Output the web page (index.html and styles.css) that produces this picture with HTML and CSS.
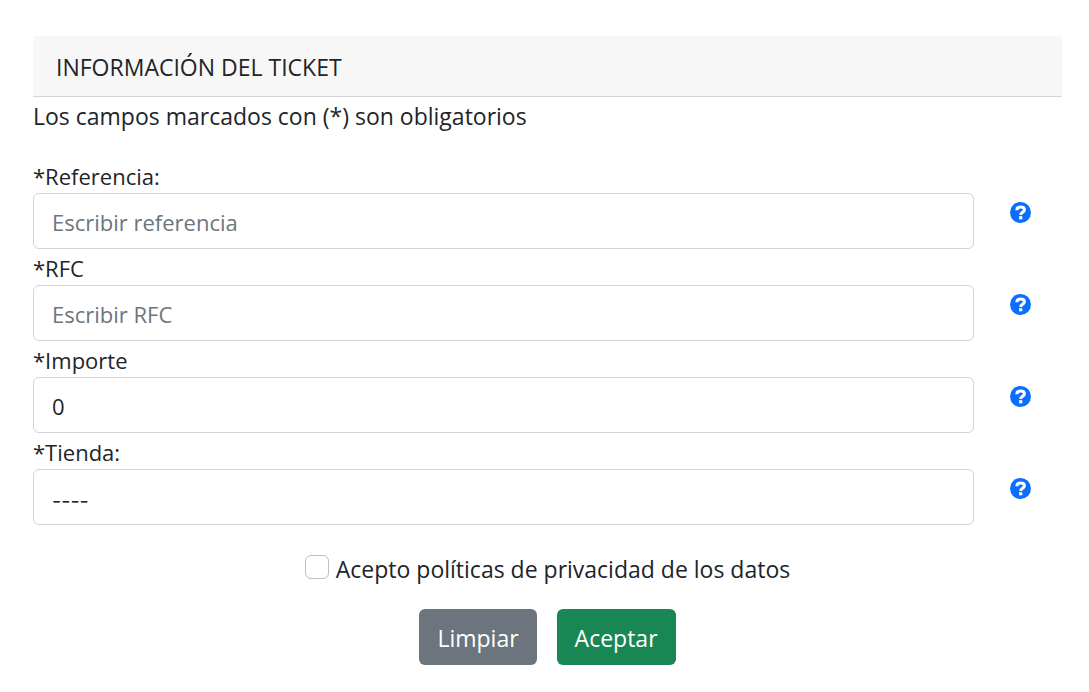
FILE: index.html
```html
<!DOCTYPE html>
<html lang="es">
<head>
<meta charset="utf-8">
<meta name="viewport" content="width=device-width, initial-scale=1">
<title>Información del ticket</title>
<link rel="stylesheet" href="styles.css">
</head>
<body>
<svg class="sprite" aria-hidden="true">
  <symbol id="help" viewBox="0 0 21 21">
    <circle cx="10.500" cy="10.500" r="10.500" fill="currentColor"/>
    <path d="M6.700 8.200C6.800 5.900 8.200 4.900 10.600 4.900c2.500 0 3.800 1.200 3.800 2.900 0 2.700-3.700 2.300-3.700 5.200" fill="none" stroke="#fff" stroke-width="3"/>
    <path d="M9.100 14.200h3.200v3.100H9.100z" fill="#fff"/>
  </symbol>
</svg>
<main class="page">
  <header class="card-header"><h1 class="title">INFORMACIÓN DEL TICKET</h1></header>
  <p class="note">Los campos marcados con (*) son obligatorios</p>
  <form class="form">
    <div class="field">
      <label class="label" for="referencia">*Referencia:</label>
      <input class="control" id="referencia" type="text" placeholder="Escribir referencia">
      <button class="help" type="button" aria-label="Ayuda"><svg class="icon"><use href="#help"/></svg></button>
    </div>
    <div class="field">
      <label class="label" for="rfc">*RFC</label>
      <input class="control" id="rfc" type="text" placeholder="Escribir RFC">
      <button class="help" type="button" aria-label="Ayuda"><svg class="icon"><use href="#help"/></svg></button>
    </div>
    <div class="field">
      <label class="label" for="importe">*Importe</label>
      <input class="control" id="importe" type="text" value="0">
      <button class="help" type="button" aria-label="Ayuda"><svg class="icon"><use href="#help"/></svg></button>
    </div>
    <div class="field">
      <label class="label" for="tienda">*Tienda:</label>
      <select class="control select" id="tienda"><option>----</option></select>
      <button class="help" type="button" aria-label="Ayuda"><svg class="icon"><use href="#help"/></svg></button>
    </div>
    <div class="consent">
      <input class="check" id="acepto" type="checkbox">
      <label for="acepto">Acepto políticas de privacidad de los datos</label>
    </div>
    <div class="actions">
      <button class="btn btn-secondary" type="reset">Limpiar</button>
      <button class="btn btn-success" type="submit">Aceptar</button>
    </div>
  </form>
</main>
</body>
</html>
```
FILE: styles.css
```css
* { box-sizing: border-box; }
body {
  margin: 0;
  background: #fff;
  color: #212529;
  font-family: "Segoe UI", "Open Sans", "Noto Sans", sans-serif;
  font-size: 23px;
  line-height: 36px;
}
.sprite { display: none; }
.page { padding: 36px 27px 27px 33px; }
.card-header {
  padding: 13px 23px 11px;
  background: #f7f7f7;
  border-bottom: 1px solid #d5d5d5;
  border-radius: 4px 4px 0 0;
}
.title { margin: 0; font-size: 23px; line-height: 36px; font-weight: 400; }
.note { margin: 1px 0 23px; }
.field {
  display: grid;
  grid-template-columns: 1fr 88px;
  font-size: 22px;
}
.label {
  grid-column: 1 / -1;
  justify-self: start;
  padding: 3px 0 1px;
  line-height: 32px;
}
.control {
  width: 100%;
  height: 56px;
  padding: 9px 18px 7px;
  border: 1px solid #ced4da;
  border-radius: 6px;
  background: #fff;
  color: inherit;
  font: inherit;
  appearance: none;
}
.control::placeholder { color: #6c757d; opacity: 1; }
.select {
  padding: 12px 18px 4px;
  font-family: Inter, sans-serif;
  font-size: 20px;
}
.help {
  justify-self: start;
  align-self: start;
  margin: 9px 0 0 36px;
  padding: 0;
  border: 0;
  background: none;
  color: #0d6efd;
  cursor: pointer;
}
.icon { display: block; width: 21px; height: 21px; }
.consent {
  display: flex;
  justify-content: center;
  align-items: flex-start;
  gap: 7px;
  margin: 26px 0 22px;
}
.check {
  width: 24px;
  height: 24px;
  margin: 4px 0 0;
  border: 1px solid #bfbfbf;
  border-radius: 6px;
  background: #fff;
  appearance: none;
}
.check:checked { background: #0d6efd; }
.actions { display: flex; justify-content: center; gap: 20px; }
.btn {
  padding: 10px 17px 8px;
  border: 1px solid transparent;
  border-radius: 6px;
  color: #fff;
  font: inherit;
  cursor: pointer;
}
.btn-secondary { background: #6c757d; }
.btn-success { background: #198754; }
```
